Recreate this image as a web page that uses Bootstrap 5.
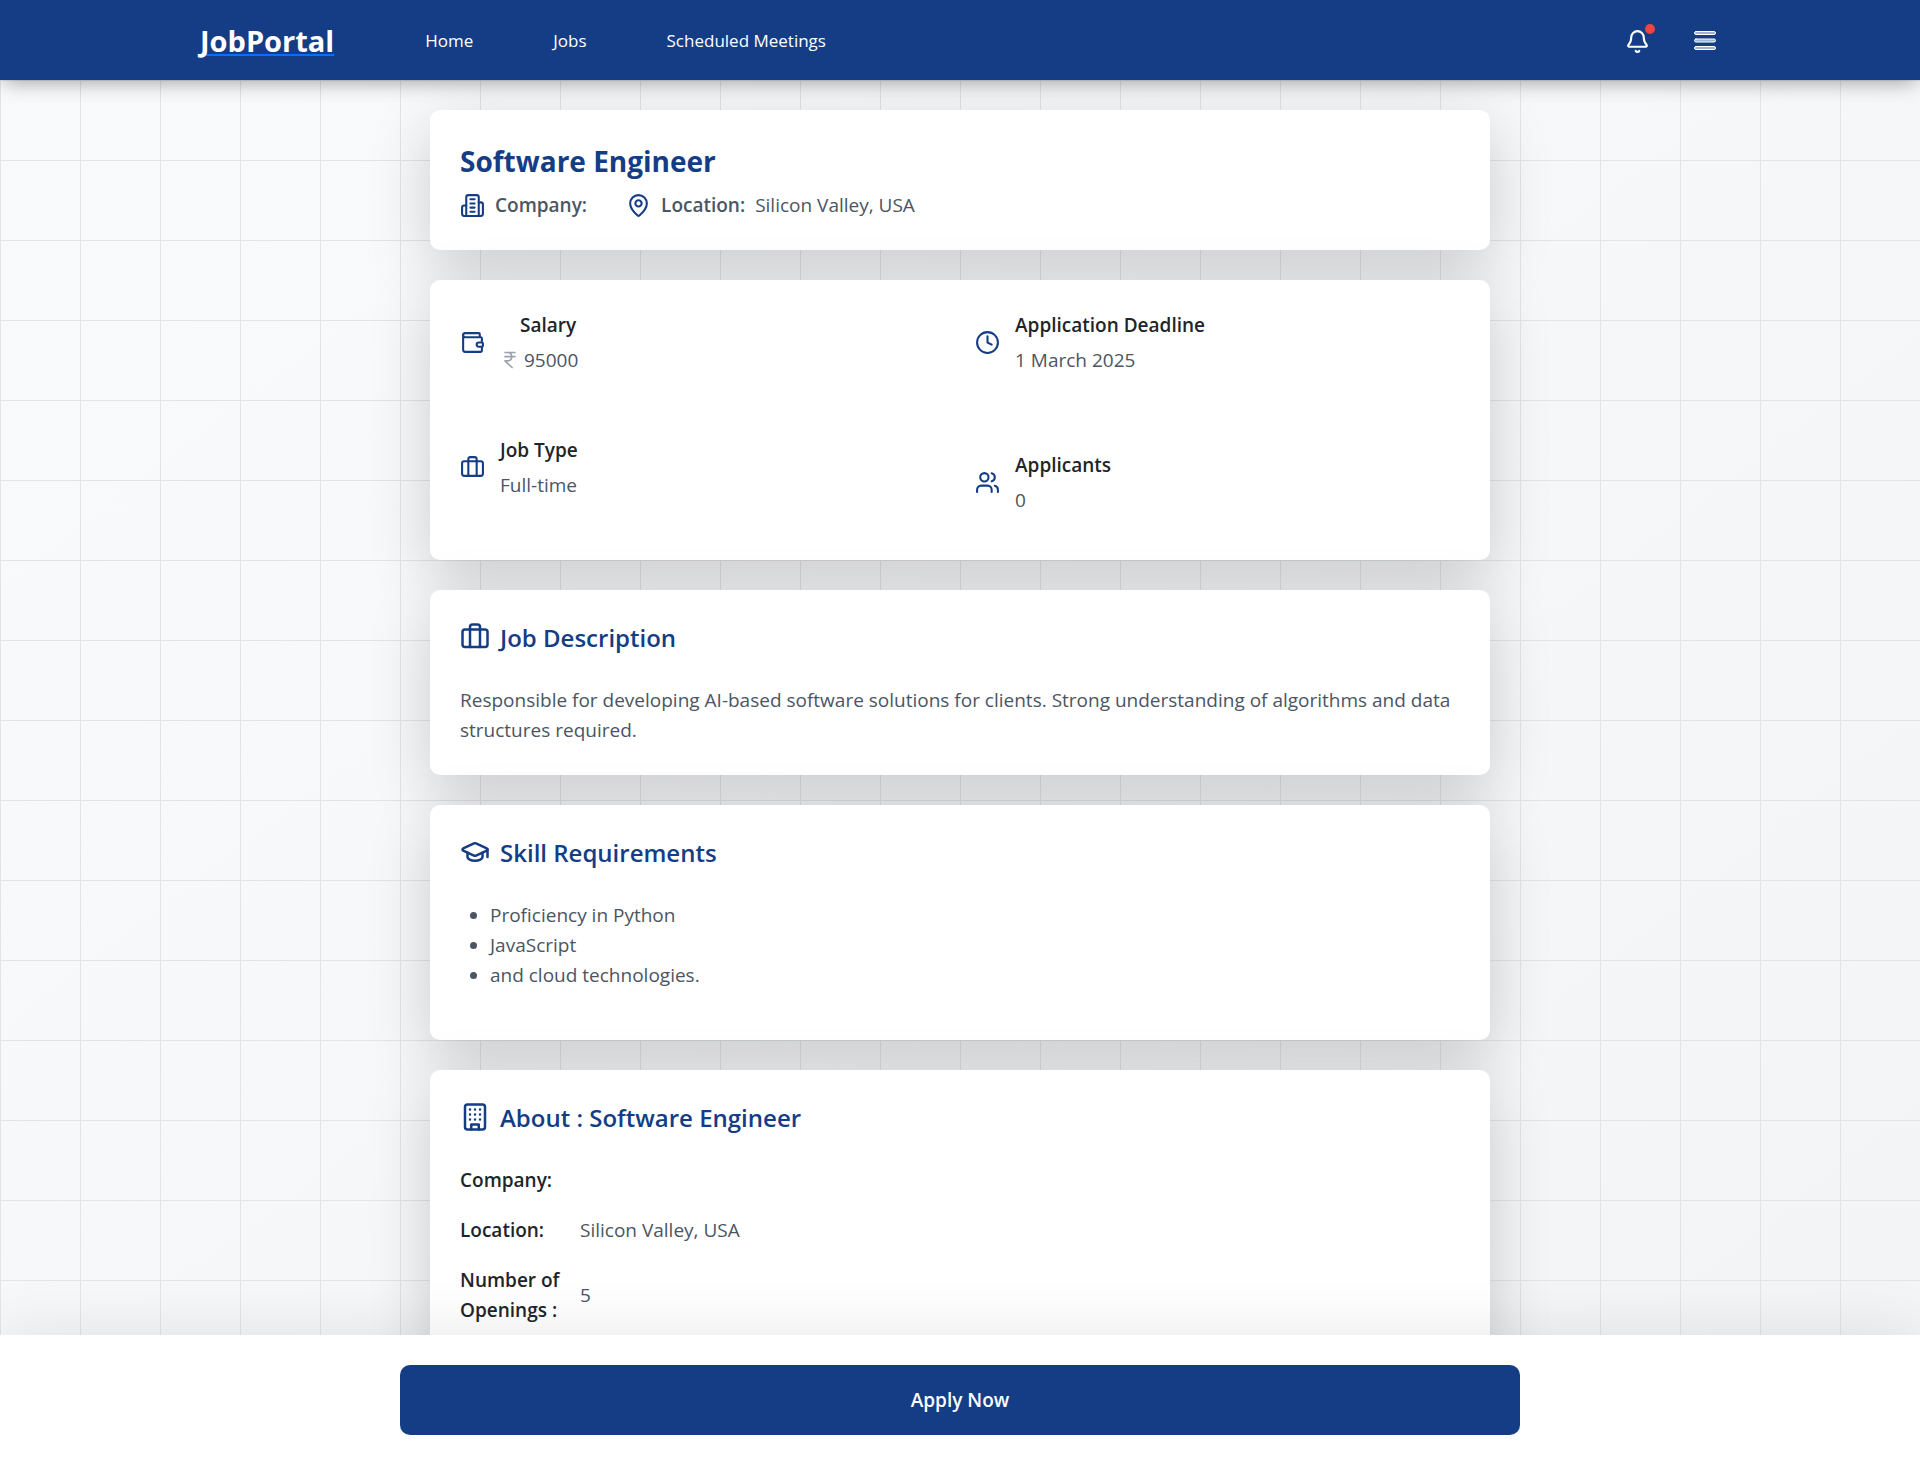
<!DOCTYPE html>
<html lang="en">
<head>
<meta charset="utf-8">
<meta name="viewport" content="width=device-width, initial-scale=1">
<title>JobPortal - Software Engineer</title>
<link href="https://cdn.jsdelivr.net/npm/bootstrap@5.3.0/dist/css/bootstrap.min.css" rel="stylesheet">
<style>
:root { --brand: #143d85; --muted: #4b5563; }
body {
  font-family: "Open Sans", "Noto Sans", sans-serif;
  font-size: 19px; line-height: 30px; color: #212529;
  height: 100vh; overflow: hidden;
  background:
    linear-gradient(to right, #e2e4e7 1px, transparent 1px) 0 0 / 80px 80px,
    linear-gradient(to bottom, #e2e4e7 1px, transparent 1px) 0 0 / 80px 80px,
    linear-gradient(to bottom right, #f9fafb, #f8f9fb 25%, #f3f4f6);
}
svg { display: block; flex: none; fill: none; stroke: currentColor; stroke-width: 2; stroke-linecap: round; stroke-linejoin: round; }
.topbar { height: 80px; padding-top: 2px; background: var(--brand); box-shadow: 0 5px 20px -4px rgba(0,0,0,.4); z-index: 1030; }
.topbar-inner { max-width: 1520px; }
.brand-link { font-size: 29px; font-weight: 700; color: #fff; line-height: 40px; text-decoration: underline; text-decoration-color: #0d6efd; text-decoration-skip-ink: none; }
.brand-link:hover { color: #fff; }
.main-links { gap: 80px; margin-left: 91px; font-size: 17px; }
.main-links a { color: #fff; text-decoration: none; }
.tools { gap: 44px; }
.icon-btn { background: none; border: 0; padding: 0; color: #fff; }
.menu-bars { stroke-width: 1; fill: #a1b1ce; }
.alert-dot { width: 10px; height: 10px; top: -5px; right: -5px; background: #ef4444; }
.page { max-width: 1120px; padding: 30px; gap: 30px; }
.panel { background: #fff; border-radius: 10px; padding: 30px; box-shadow: 0 18px 62px rgba(0,0,0,.18); }
.job-title { font-size: 28px; line-height: 42px; font-weight: 700; color: var(--brand); margin-bottom: 8px; }
.sec-title { font-size: 24px; line-height: 35px; font-weight: 600; color: var(--brand); margin-bottom: 30px; gap: 10px; }
.sec-title svg { margin-bottom: 1px; }
.tint { color: var(--brand); }
.soft { color: var(--muted); }
.facts { display: grid; grid-template-columns: 1fr 1fr; grid-auto-rows: 95px; gap: 30px; }
.fact { gap: 15px; }
.fact-label { margin-bottom: 5px; }
.salary-label { padding-left: 20px; }
.rupee { color: #9ca3af; }
.meta-row { gap: 39px; }
.meta-item { gap: 10px; }
.skills { padding-left: 30px; margin-bottom: 20px; }
.about-row { display: grid; grid-template-columns: 100px 1fr; gap: 20px; align-items: center; margin-bottom: 20px; }
.apply-bar { background: #fff; padding: 30px; box-shadow: 0 0 62px rgba(0,0,0,.1); z-index: 1020; }
.apply-btn { max-width: 1120px; height: 70px; border-radius: 10px; border: 0; background: var(--brand); color: #fff; font-weight: 600; }
</style>
</head>
<body>
<nav class="topbar sticky-top d-flex align-items-center" aria-label="Main">
  <div class="topbar-inner container-fluid p-0 d-flex align-items-center">
    <a class="brand-link" href="#">JobPortal</a>
    <div class="main-links d-flex">
      <a href="#">Home</a>
      <a href="#">Jobs</a>
      <a href="#">Scheduled Meetings</a>
    </div>
    <div class="tools d-flex align-items-center ms-auto pe-1">
      <button class="icon-btn position-relative" type="button" aria-label="Notifications">
        <svg width="25" height="25" viewBox="0 0 24 24"><path d="M10.268 21a2 2 0 0 0 3.464 0"/><path d="M3.262 15.326A1 1 0 0 0 4 17h16a1 1 0 0 0 .74-1.673C19.41 13.956 18 12.499 18 8A6 6 0 0 0 6 8c0 4.499-1.411 5.956-2.738 7.326"/></svg>
        <span class="alert-dot position-absolute rounded-circle"></span>
      </button>
      <button class="icon-btn" type="button" aria-label="Menu">
        <svg class="menu-bars" width="22" height="20" viewBox="0 0 22 20"><rect x=".5" y=".5" width="21" height="3" rx="1.5"/><rect x=".5" y="8" width="21" height="3" rx="1.5"/><rect x=".5" y="15.5" width="21" height="3" rx="1.5"/></svg>
      </button>
    </div>
  </div>
</nav>

<main class="page container-fluid d-flex flex-column">
  <section class="panel">
    <h1 class="job-title">Software Engineer</h1>
    <div class="meta-row soft d-flex align-items-center">
      <div class="meta-item d-flex align-items-center">
        <svg class="tint" width="25" height="25" viewBox="0 0 24 24"><path d="M6 22V4a2 2 0 0 1 2-2h8a2 2 0 0 1 2 2v18Z"/><path d="M6 12H4a2 2 0 0 0-2 2v6a2 2 0 0 0 2 2h2"/><path d="M18 9h2a2 2 0 0 1 2 2v9a2 2 0 0 1-2 2h-2"/><path d="M10 6h4M10 10h4M10 14h4M10 18h4"/></svg>
        <span class="fw-semibold">Company:</span>
      </div>
      <div class="meta-item d-flex align-items-center">
        <svg class="tint" width="25" height="25" viewBox="0 0 24 24"><path d="M20 10c0 4.993-5.539 10.193-7.399 11.799a1 1 0 0 1-1.202 0C9.539 20.193 4 14.993 4 10a8 8 0 0 1 16 0"/><circle cx="12" cy="10" r="3"/></svg>
        <span class="fw-semibold">Location:</span>
        <span>Silicon Valley, USA</span>
      </div>
    </div>
  </section>

  <section class="panel facts">
    <div class="d-flex align-items-start">
      <div class="d-flex align-items-center fact">
        <svg class="tint" width="25" height="25" viewBox="0 0 24 24"><path d="M19 7V4a1 1 0 0 0-1-1H5a2 2 0 0 0 0 4h15a1 1 0 0 1 1 1v4h-3a2 2 0 0 0 0 4h3a1 1 0 0 0 1-1v-2a1 1 0 0 0-1-1"/><path d="M3 5v14a2 2 0 0 0 2 2h15a1 1 0 0 0 1-1v-4"/></svg>
        <div>
          <div class="fact-label salary-label fw-semibold">Salary</div>
          <div class="soft d-flex align-items-center gap-1"><svg class="rupee" width="20" height="20" viewBox="0 0 24 24"><path d="M6 3h12M6 8h12M6 13l8.5 8M6 13h3M9 13c6.667 0 6.667-10 0-10"/></svg><span>95000</span></div>
        </div>
      </div>
    </div>
    <div class="d-flex align-items-start">
      <div class="d-flex align-items-center fact">
        <svg class="tint" width="25" height="25" viewBox="0 0 24 24"><circle cx="12" cy="12" r="10"/><path d="M12 6v6l4 2"/></svg>
        <div>
          <div class="fact-label fw-semibold">Application Deadline</div>
          <div class="soft">1 March 2025</div>
        </div>
      </div>
    </div>
    <div class="d-flex align-items-start">
      <div class="d-flex align-items-center fact">
        <svg class="tint" width="25" height="25" viewBox="0 0 24 24"><path d="M16 20V4a2 2 0 0 0-2-2h-4a2 2 0 0 0-2 2v16"/><rect x="2" y="6" width="20" height="14" rx="2"/></svg>
        <div>
          <div class="fact-label fw-semibold">Job Type</div>
          <div class="soft">Full-time</div>
        </div>
      </div>
    </div>
    <div class="fact d-flex align-items-center">
      <svg class="tint" width="25" height="25" viewBox="0 0 24 24"><path d="M16 21v-2a4 4 0 0 0-4-4H6a4 4 0 0 0-4 4v2"/><circle cx="9" cy="7" r="4"/><path d="M22 21v-2a4 4 0 0 0-3-3.87M16 3.13a4 4 0 0 1 0 7.75"/></svg>
      <div>
        <div class="fact-label fw-semibold">Applicants</div>
        <div class="soft">0</div>
      </div>
    </div>
  </section>

  <section class="panel">
    <h2 class="sec-title d-flex align-items-center"><svg width="30" height="30" viewBox="0 0 24 24"><path d="M16 20V4a2 2 0 0 0-2-2h-4a2 2 0 0 0-2 2v16"/><rect x="2" y="6" width="20" height="14" rx="2"/></svg>Job Description</h2>
    <p class="soft mb-0">Responsible for developing AI-based software solutions for clients. Strong understanding of algorithms and data structures required.</p>
  </section>

  <section class="panel">
    <h2 class="sec-title d-flex align-items-center"><svg width="30" height="30" viewBox="0 0 24 24"><path d="M21.42 10.922a1 1 0 0 0-.019-1.838L12.83 5.18a2 2 0 0 0-1.66 0L2.6 9.08a1 1 0 0 0 0 1.832l8.57 3.908a2 2 0 0 0 1.66 0z"/><path d="M22 10v6M6 12.5V16a6 3 0 0 0 12 0v-3.5"/></svg>Skill Requirements</h2>
    <ul class="skills soft">
      <li>Proficiency in Python</li>
      <li>JavaScript</li>
      <li>and cloud technologies.</li>
    </ul>
  </section>

  <section class="panel">
    <h2 class="sec-title d-flex align-items-center"><svg width="30" height="30" viewBox="0 0 24 24"><rect x="4" y="2" width="16" height="20" rx="2"/><path d="M9 22v-4h6v4M8 6h.01M16 6h.01M12 6h.01M12 10h.01M12 14h.01M16 10h.01M16 14h.01M8 10h.01M8 14h.01"/></svg>About : Software Engineer</h2>
    <div class="about-row"><span class="fw-semibold">Company:</span><span class="soft"></span></div>
    <div class="about-row"><span class="fw-semibold">Location:</span><span class="soft">Silicon Valley, USA</span></div>
    <div class="about-row"><span class="fw-semibold">Number of Openings :</span><span class="soft">5</span></div>
  </section>
</main>

<div class="apply-bar fixed-bottom d-flex justify-content-center">
  <button class="apply-btn w-100" type="button">Apply Now</button>
</div>
<script src="https://cdn.jsdelivr.net/npm/bootstrap@5.3.0/dist/js/bootstrap.bundle.min.js"></script>
</body>
</html>
